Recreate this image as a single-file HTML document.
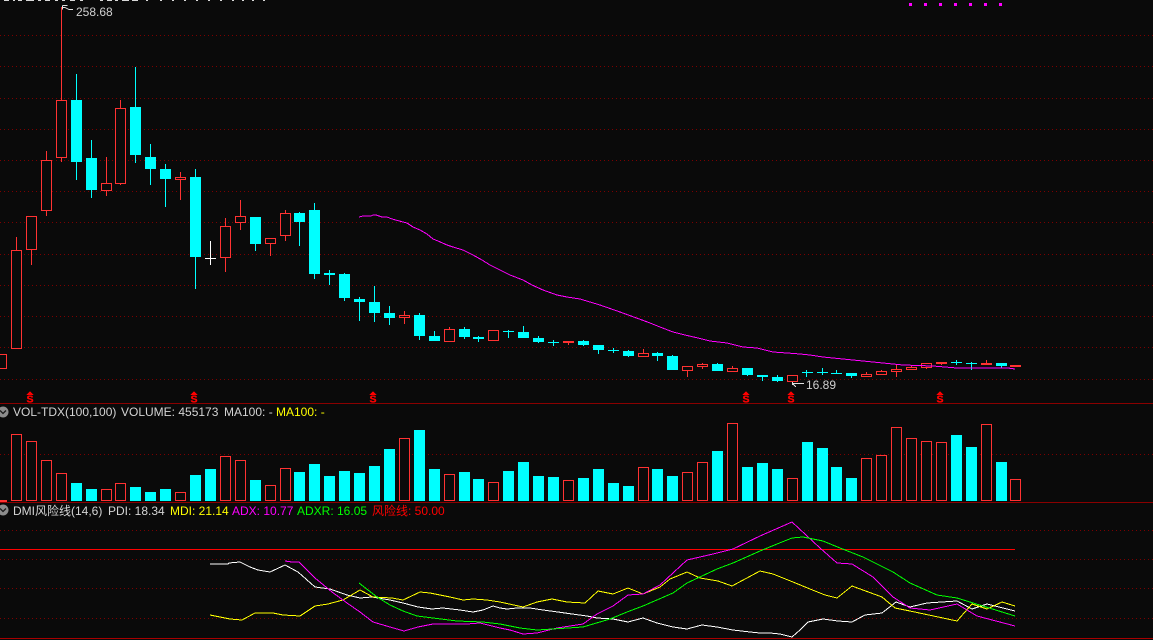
<!DOCTYPE html>
<html>
<head>
<meta charset="utf-8">
<style>
html,body{margin:0;padding:0;background:#0a0a0a;width:1153px;height:640px;overflow:hidden}
svg{display:block}
text{font-family:"Liberation Sans","Noto Sans CJK SC",sans-serif;font-size:12px}
text.s{font-size:10.5px;font-weight:bold;fill:#ff0000;stroke:#ff0000;stroke-width:.35;text-anchor:middle}
</style>
</head>
<body>
<svg width="1153" height="640" viewBox="0 0 1153 640" xmlns="http://www.w3.org/2000/svg" shape-rendering="crispEdges">
<rect width="1153" height="640" fill="#0a0a0a"/>
<path stroke="#7c0000" stroke-width="1" stroke-dasharray="1 3" fill="none" d="M0 35.5H1153M0 66.5H1153M0 98.5H1153M0 129.5H1153M0 160.5H1153M0 191.5H1153M0 222.5H1153M0 254.5H1153M0 285.5H1153M0 316.5H1153M0 347.5H1153M0 379.5H1153M0 454.5H1153M0 530.5H1153M0 559.5H1153M0 588.5H1153M0 618.5H1153"/>
<path stroke="#8a0000" fill="none" d="M0 403.5H1153M0 502.5H1153"/>
<path stroke="#a80000" fill="none" d="M0 638.5H1153"/>
<path stroke="#ff0000" fill="none" d="M0 549.5H1015"/>
<path stroke="#d8d8d8" fill="none" d="M4 0.5h5M13 0.5h2M18 0.5h4M26 0.5h8M38 0.5h3M45 0.5h5M55 0.5h3M62 0.5h3M70 0.5h5M80 0.5h3M100 0.5h3M107 0.5h5M115 0.5h3M122 0.5h7M132 0.5h6M146 0.5h2M160 0.5h2M172 0.5h2M184 0.5h2M196 0.5h2M208 0.5h2M220 0.5h2M232 0.5h2M242 0.5h2M252 0.5h2M263 0.5h2"/>
<g fill="#ff00ff"><rect x="909" y="3" width="3" height="3"/><rect x="924" y="3" width="3" height="3"/><rect x="939" y="3" width="3" height="3"/><rect x="954" y="3" width="3" height="3"/><rect x="969" y="3" width="3" height="3"/><rect x="984" y="3" width="3" height="3"/><rect x="999" y="3" width="3" height="3"/></g>
<path stroke="#ff3232" fill="none" d="M16.5 237V250M31.5 250V265M46.5 151V216M61.5 7V162M106.5 157V196M120.5 100V185M180.5 172V200M225.5 218V272M240.5 200V230M270.5 238V256M285.5 210V241M404.5 311V324M449.5 327V329M568.5 343V345M643.5 349V353M687.5 371V377M702.5 363V369M732.5 366V368M866.5 372V374M881.5 370V371M896.5 365V377M911.5 365V367M926.5 368V369M941.5 364V365M986.5 360V363"/>
<path stroke="#00ffff" fill="none" d="M76.5 74V180M91.5 140V198M135.5 67V163M150.5 144V185M165.5 164V207M195.5 169V289M255.5 217V251M299.5 212V246M314.5 203V279M329.5 270V285M344.5 273V301M359.5 297V321M374.5 286V322M389.5 306V325M419.5 313V340M434.5 331V336M464.5 327V339M478.5 336V342M508.5 330V338M523.5 326V332M538.5 336V343M553.5 340V346M583.5 340V346M598.5 345V354M613.5 348V353M628.5 350V357M657.5 352V361M672.5 355V356M717.5 363V364M747.5 375V376M762.5 377V381M777.5 375V382M806.5 370V377M822.5 368V375M836.5 370V374M851.5 376V378M956.5 360V365M971.5 362V370M1001.5 366V368"/>
<path stroke="#ffffff" fill="none" d="M210.5 241V265M205 258.5H216"/>
<g fill="#0a0a0a" stroke="#ff3232">
<rect x="-3.5" y="354.5" width="10" height="14"/>
<rect x="11.5" y="250.5" width="10" height="98"/>
<rect x="26.5" y="216.5" width="10" height="33"/>
<rect x="41.5" y="160.5" width="10" height="50"/>
<rect x="56.5" y="100.5" width="10" height="57"/>
<rect x="101.5" y="183.5" width="10" height="7"/>
<rect x="115.5" y="108.5" width="10" height="75"/>
<rect x="175.5" y="177.5" width="10" height="2"/>
<rect x="220.5" y="226.5" width="10" height="31"/>
<rect x="235.5" y="216.5" width="10" height="6"/>
<rect x="265.5" y="238.5" width="10" height="5"/>
<rect x="280.5" y="213.5" width="10" height="22"/>
<rect x="399.5" y="315.5" width="10" height="2"/>
<rect x="444.5" y="329.5" width="10" height="12"/>
<rect x="488.5" y="330.5" width="10" height="10"/>
<rect x="638.5" y="353.5" width="10" height="3"/>
<rect x="682.5" y="366.5" width="10" height="4"/>
<rect x="697.5" y="364.5" width="10" height="2"/>
<rect x="727.5" y="368.5" width="10" height="3"/>
<rect x="787.5" y="375.5" width="10" height="6"/>
<rect x="861.5" y="374.5" width="10" height="2"/>
<rect x="876.5" y="371.5" width="10" height="3"/>
<rect x="891.5" y="369.5" width="10" height="2"/>
<rect x="906.5" y="367.5" width="10" height="2"/>
<rect x="921.5" y="363.5" width="10" height="4"/>
</g>
<g fill="#ff3232">
<rect x="563" y="341" width="11" height="2"/>
<rect x="936" y="362" width="11" height="2"/>
<rect x="981" y="363" width="11" height="2"/>
<rect x="1010" y="365" width="11" height="2"/>
</g>
<g fill="#00ffff">
<rect x="71" y="100" width="11" height="62"/>
<rect x="86" y="158" width="11" height="32"/>
<rect x="130" y="107" width="11" height="48"/>
<rect x="145" y="157" width="11" height="12"/>
<rect x="160" y="169" width="11" height="10"/>
<rect x="190" y="177" width="11" height="80"/>
<rect x="250" y="217" width="11" height="27"/>
<rect x="294" y="213" width="11" height="9"/>
<rect x="309" y="210" width="11" height="64"/>
<rect x="324" y="273" width="11" height="2"/>
<rect x="339" y="274" width="11" height="24"/>
<rect x="354" y="299" width="11" height="3"/>
<rect x="369" y="302" width="11" height="11"/>
<rect x="384" y="313" width="11" height="5"/>
<rect x="414" y="315" width="11" height="21"/>
<rect x="429" y="336" width="11" height="5"/>
<rect x="459" y="329" width="11" height="8"/>
<rect x="473" y="337" width="11" height="2"/>
<rect x="503" y="331" width="11" height="1"/>
<rect x="518" y="332" width="11" height="6"/>
<rect x="533" y="338" width="11" height="4"/>
<rect x="548" y="342" width="11" height="1"/>
<rect x="578" y="341" width="11" height="4"/>
<rect x="593" y="345" width="11" height="5"/>
<rect x="608" y="350" width="11" height="1"/>
<rect x="623" y="351" width="11" height="5"/>
<rect x="652" y="353" width="11" height="3"/>
<rect x="667" y="356" width="11" height="14"/>
<rect x="712" y="364" width="11" height="7"/>
<rect x="742" y="368" width="11" height="7"/>
<rect x="757" y="375" width="11" height="2"/>
<rect x="772" y="377" width="11" height="4"/>
<rect x="802" y="372" width="11" height="1"/>
<rect x="817" y="372" width="11" height="1"/>
<rect x="831" y="373" width="11" height="1"/>
<rect x="846" y="373" width="11" height="3"/>
<rect x="951" y="362" width="11" height="1"/>
<rect x="966" y="363" width="11" height="1"/>
<rect x="996" y="363" width="11" height="3"/>
</g>
<polyline fill="none" stroke="#ff00ff" points="359,217 363,216 371,216 373,215 376,215 382,217 387,217 392,219 403,222 407,223 413,227 420,230 427,234 433,239 438,241 447,245 453,247 463,250 473,255 482,260 490,265 500,270 510,275 523,280 532,285 543,290 557,295 567,297 580,299 600,305 620,312 642,320 650,323 660,327 673,332 685,335 698,338 710,341 727,343 743,347 757,348 773,352 787,353 800,354 810,355 823,357 843,359 863,361 883,363 903,365 933,366 957,368 977,368 1008,368 1015,369"/>
<path stroke="#e0e0e0" fill="none" d="M62.5 5.5h5M62.5 5.5v4M62 7.5h3M65 7.5l4 2h4"/>
<text x="76" y="16" fill="#d0d0d0">258.68</text>
<path stroke="#e0e0e0" fill="none" d="M792 383.5H804M792.5 382v3M793 384l3 3"/>
<text x="806" y="389" fill="#d0d0d0">16.89</text>
<g fill="#ff0000">
<path d="M30 391l3.5 4h-7z"/><path d="M194 391l3.5 4h-7z"/><path d="M373 391l3.5 4h-7z"/><path d="M746 391l3.5 4h-7z"/><path d="M791 391l3.5 4h-7z"/><path d="M940 391l3.5 4h-7z"/>
</g>
<text class="s" x="30" y="402.5">S</text>
<text class="s" x="194" y="402.5">S</text>
<text class="s" x="373" y="402.5">S</text>
<text class="s" x="746" y="402.5">S</text>
<text class="s" x="791" y="402.5">S</text>
<text class="s" x="940" y="402.5">S</text>
<g shape-rendering="auto">
<circle cx="3" cy="412" r="5.5" fill="#8c8c8c"/><path d="M0 410.5l3 3 3-3" fill="none" stroke="#1a1a1a" stroke-width="1.3"/>
<circle cx="3" cy="510" r="5.5" fill="#8c8c8c"/><path d="M0 508.5l3 3 3-3" fill="none" stroke="#1a1a1a" stroke-width="1.3"/>
</g>
<text x="13" y="416" fill="#d4d4d4">VOL-TDX(100,100)</text>
<text x="121" y="416" fill="#d4d4d4">VOLUME: 455173</text>
<text x="224" y="416" fill="#d4d4d4">MA100: -</text>
<text x="276" y="416" fill="#ffff00">MA100: -</text>
<rect x="0" y="500" width="7" height="2" fill="#ff3232"/>
<g fill="#0a0a0a" stroke="#ff3232">
<rect x="11.5" y="434.5" width="10" height="66"/>
<rect x="26.5" y="441.5" width="10" height="59"/>
<rect x="41.5" y="460.5" width="10" height="40"/>
<rect x="56.5" y="473.5" width="10" height="27"/>
<rect x="101.5" y="489.5" width="10" height="11"/>
<rect x="115.5" y="483.5" width="10" height="17"/>
<rect x="175.5" y="492.5" width="10" height="8"/>
<rect x="220.5" y="456.5" width="10" height="44"/>
<rect x="235.5" y="460.5" width="10" height="40"/>
<rect x="265.5" y="485.5" width="10" height="15"/>
<rect x="280.5" y="468.5" width="10" height="32"/>
<rect x="399.5" y="438.5" width="10" height="62"/>
<rect x="444.5" y="474.5" width="10" height="26"/>
<rect x="488.5" y="482.5" width="10" height="18"/>
<rect x="563.5" y="480.5" width="10" height="20"/>
<rect x="638.5" y="467.5" width="10" height="33"/>
<rect x="682.5" y="472.5" width="10" height="28"/>
<rect x="697.5" y="462.5" width="10" height="38"/>
<rect x="727.5" y="423.5" width="10" height="77"/>
<rect x="787.5" y="478.5" width="10" height="22"/>
<rect x="861.5" y="458.5" width="10" height="42"/>
<rect x="876.5" y="455.5" width="10" height="45"/>
<rect x="891.5" y="427.5" width="10" height="73"/>
<rect x="906.5" y="438.5" width="10" height="62"/>
<rect x="921.5" y="441.5" width="10" height="59"/>
<rect x="936.5" y="442.5" width="10" height="58"/>
<rect x="981.5" y="424.5" width="10" height="76"/>
<rect x="1010.5" y="479.5" width="10" height="21"/>
</g>
<g fill="#00ffff">
<rect x="71" y="483" width="11" height="18"/>
<rect x="86" y="489" width="11" height="12"/>
<rect x="130" y="487" width="11" height="14"/>
<rect x="145" y="492" width="11" height="9"/>
<rect x="160" y="489" width="11" height="12"/>
<rect x="190" y="475" width="11" height="26"/>
<rect x="205" y="469" width="11" height="32"/>
<rect x="250" y="480" width="11" height="21"/>
<rect x="294" y="472" width="11" height="29"/>
<rect x="309" y="464" width="11" height="37"/>
<rect x="324" y="476" width="11" height="25"/>
<rect x="339" y="471" width="11" height="30"/>
<rect x="354" y="473" width="11" height="28"/>
<rect x="369" y="466" width="11" height="35"/>
<rect x="384" y="449" width="11" height="52"/>
<rect x="414" y="430" width="11" height="71"/>
<rect x="429" y="469" width="11" height="32"/>
<rect x="459" y="472" width="11" height="29"/>
<rect x="473" y="479" width="11" height="22"/>
<rect x="503" y="471" width="11" height="30"/>
<rect x="518" y="462" width="11" height="39"/>
<rect x="533" y="476" width="11" height="25"/>
<rect x="548" y="477" width="11" height="24"/>
<rect x="578" y="478" width="11" height="23"/>
<rect x="593" y="469" width="11" height="32"/>
<rect x="608" y="483" width="11" height="18"/>
<rect x="623" y="486" width="11" height="15"/>
<rect x="652" y="469" width="11" height="32"/>
<rect x="667" y="476" width="11" height="25"/>
<rect x="712" y="451" width="11" height="50"/>
<rect x="742" y="467" width="11" height="34"/>
<rect x="757" y="463" width="11" height="38"/>
<rect x="772" y="469" width="11" height="32"/>
<rect x="802" y="442" width="11" height="59"/>
<rect x="817" y="448" width="11" height="53"/>
<rect x="831" y="467" width="11" height="34"/>
<rect x="846" y="478" width="11" height="23"/>
<rect x="951" y="435" width="11" height="66"/>
<rect x="966" y="447" width="11" height="54"/>
<rect x="996" y="462" width="11" height="39"/>
</g>
<text x="13" y="515" fill="#d4d4d4">DMI风险线(14,6)</text>
<text x="108" y="515" fill="#d4d4d4">PDI: 18.34</text>
<text x="170" y="515" fill="#ffff00">MDI: 21.14</text>
<text x="232" y="515" fill="#ff00ff">ADX: 10.77</text>
<text x="297" y="515" fill="#00ff00">ADXR: 16.05</text>
<text x="372" y="515" fill="#ff0000">风险线: 50.00</text>
<polyline fill="none" stroke="#ffffff" points="210,564 228,564 229,563 240,562 250,567 258,570 270,572 285,565 298,572 315,587 330,589 347,595 360,598 372,597 390,600 403,603 418,607 432,609 443,608 460,610 473,612 483,610 493,606 500,608 507,609 517,608 530,608 543,610 558,612 572,614 587,616 597,618 613,619 628,622 643,618 657,623 673,627 687,629 702,625 717,627 733,630 750,632 760,633 770,633 780,634 792,637 800,630 808,622 823,619 838,621 852,622 865,615 882,613 896,602 910,607 927,603 957,601 972,609 987,604 1015,611"/>
<polyline fill="none" stroke="#ffff00" points="210,615 220,617 230,619 242,620 255,613 273,613 283,615 300,616 315,606 328,604 343,600 360,590 373,597 392,598 403,600 420,592 430,593 450,597 463,600 473,599 487,600 500,602 523,607 537,602 552,599 567,602 585,603 598,591 613,594 628,588 643,594 660,587 670,579 687,572 700,578 718,581 732,586 760,571 773,574 793,582 810,589 825,595 837,598 852,586 882,597 895,608 910,611 957,621 972,604 987,609 1002,602 1015,606"/>
<polyline fill="none" stroke="#ff00ff" points="285,561 292,562 299,562 315,578 332,592 347,603 360,612 373,622 390,627 404,631 418,627 433,624 467,624 480,623 500,628 510,630 523,634 537,633 557,628 583,624 597,614 613,606 628,595 643,594 660,585 687,560 713,554 733,549 760,536 792,522 820,548 837,563 852,564 873,577 893,597 910,608 930,610 957,604 977,616 1015,626"/>
<polyline fill="none" stroke="#00ff00" points="359,583 377,597 390,605 403,611 417,616 433,618 457,621 483,622 500,624 520,628 537,630 583,627 610,619 627,612 643,606 673,593 687,583 717,569 733,563 760,551 777,544 792,538 803,537 823,541 840,548 863,557 893,572 910,583 937,595 957,598 1015,616"/>
</svg>
</body>
</html>
